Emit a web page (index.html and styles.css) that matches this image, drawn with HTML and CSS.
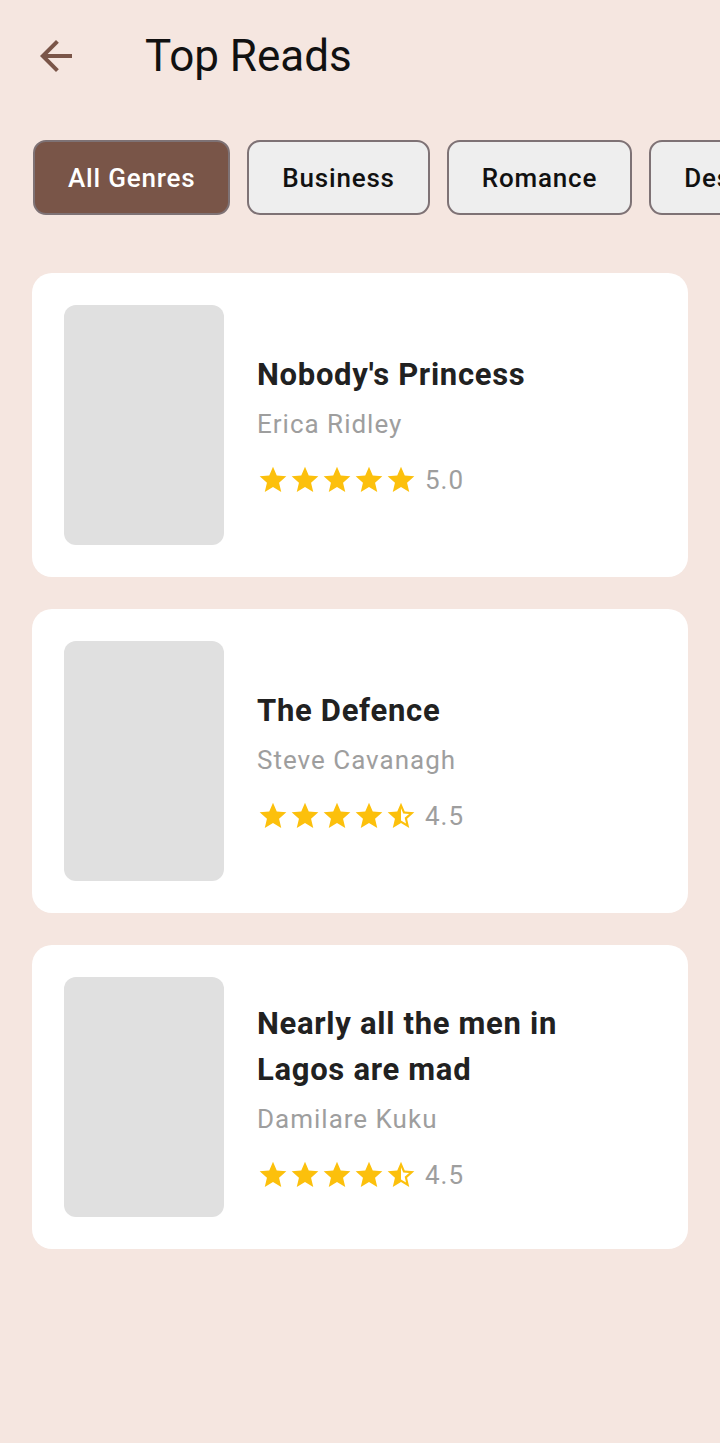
FILE: index.html
```html
<!DOCTYPE html>
<html>
<head>
<meta charset="utf-8">
<link rel="stylesheet" href="styles.css">
</head>
<body>
<div class="screen">
  <header class="appbar">
    <button class="back" aria-label="Back">
      <svg width="48" height="48" viewBox="0 0 24 24"><path d="M20 11H7.83l5.59-5.59L12 4l-8 8 8 8 1.41-1.41L7.83 13H20v-2z" fill="#7a5548"/></svg>
    </button>
    <h1 class="title">Top Reads</h1>
  </header>

  <nav class="chips">
    <span class="chip active">All Genres</span>
    <span class="chip">Business</span>
    <span class="chip">Romance</span>
    <span class="chip">Design</span>
    <span class="chip">Fiction</span>
  </nav>

  <main class="list">
    <article class="card">
      <div class="cover"></div>
      <div class="info">
        <h2 class="book-title">Nobody's Princess</h2>
        <p class="author">Erica Ridley</p>
        <div class="rating">
          <span class="stars">
            <svg class="star" viewBox="0 0 24 24"><path d="M12 17.27L18.18 21l-1.64-7.03L22 9.24l-7.19-.61L12 2 9.19 8.63 2 9.24l5.46 4.73L5.82 21z"/></svg>
            <svg class="star" viewBox="0 0 24 24"><path d="M12 17.27L18.18 21l-1.64-7.03L22 9.24l-7.19-.61L12 2 9.19 8.63 2 9.24l5.46 4.73L5.82 21z"/></svg>
            <svg class="star" viewBox="0 0 24 24"><path d="M12 17.27L18.18 21l-1.64-7.03L22 9.24l-7.19-.61L12 2 9.19 8.63 2 9.24l5.46 4.73L5.82 21z"/></svg>
            <svg class="star" viewBox="0 0 24 24"><path d="M12 17.27L18.18 21l-1.64-7.03L22 9.24l-7.19-.61L12 2 9.19 8.63 2 9.24l5.46 4.73L5.82 21z"/></svg>
            <svg class="star" viewBox="0 0 24 24"><path d="M12 17.27L18.18 21l-1.64-7.03L22 9.24l-7.19-.61L12 2 9.19 8.63 2 9.24l5.46 4.73L5.82 21z"/></svg>
          </span>
          <span class="score">5.0</span>
        </div>
      </div>
    </article>

    <article class="card">
      <div class="cover"></div>
      <div class="info">
        <h2 class="book-title">The Defence</h2>
        <p class="author">Steve Cavanagh</p>
        <div class="rating">
          <span class="stars">
            <svg class="star" viewBox="0 0 24 24"><path d="M12 17.27L18.18 21l-1.64-7.03L22 9.24l-7.19-.61L12 2 9.19 8.63 2 9.24l5.46 4.73L5.82 21z"/></svg>
            <svg class="star" viewBox="0 0 24 24"><path d="M12 17.27L18.18 21l-1.64-7.03L22 9.24l-7.19-.61L12 2 9.19 8.63 2 9.24l5.46 4.73L5.82 21z"/></svg>
            <svg class="star" viewBox="0 0 24 24"><path d="M12 17.27L18.18 21l-1.64-7.03L22 9.24l-7.19-.61L12 2 9.19 8.63 2 9.24l5.46 4.73L5.82 21z"/></svg>
            <svg class="star" viewBox="0 0 24 24"><path d="M12 17.27L18.18 21l-1.64-7.03L22 9.24l-7.19-.61L12 2 9.19 8.63 2 9.24l5.46 4.73L5.82 21z"/></svg>
            <svg class="star" viewBox="0 0 24 24"><path d="M22 9.24l-7.19-.62L12 2 9.19 8.63 2 9.24l5.46 4.73L5.82 21 12 17.27 18.18 21l-1.63-7.03L22 9.24zM12 15.4V6.1l1.71 4.04 4.38.38-3.32 2.88 1 4.28L12 15.4z"/></svg>
          </span>
          <span class="score">4.5</span>
        </div>
      </div>
    </article>

    <article class="card">
      <div class="cover"></div>
      <div class="info">
        <h2 class="book-title">Nearly all the men in Lagos are mad</h2>
        <p class="author">Damilare Kuku</p>
        <div class="rating">
          <span class="stars">
            <svg class="star" viewBox="0 0 24 24"><path d="M12 17.27L18.18 21l-1.64-7.03L22 9.24l-7.19-.61L12 2 9.19 8.63 2 9.24l5.46 4.73L5.82 21z"/></svg>
            <svg class="star" viewBox="0 0 24 24"><path d="M12 17.27L18.18 21l-1.64-7.03L22 9.24l-7.19-.61L12 2 9.19 8.63 2 9.24l5.46 4.73L5.82 21z"/></svg>
            <svg class="star" viewBox="0 0 24 24"><path d="M12 17.27L18.18 21l-1.64-7.03L22 9.24l-7.19-.61L12 2 9.19 8.63 2 9.24l5.46 4.73L5.82 21z"/></svg>
            <svg class="star" viewBox="0 0 24 24"><path d="M12 17.27L18.18 21l-1.64-7.03L22 9.24l-7.19-.61L12 2 9.19 8.63 2 9.24l5.46 4.73L5.82 21z"/></svg>
            <svg class="star" viewBox="0 0 24 24"><path d="M22 9.24l-7.19-.62L12 2 9.19 8.63 2 9.24l5.46 4.73L5.82 21 12 17.27 18.18 21l-1.63-7.03L22 9.24zM12 15.4V6.1l1.71 4.04 4.38.38-3.32 2.88 1 4.28L12 15.4z"/></svg>
          </span>
          <span class="score">4.5</span>
        </div>
      </div>
    </article>
  </main>
</div>
</body>
</html>
```

FILE: styles.css
```css
* { box-sizing: border-box; }

html, body {
  margin: 0;
  padding: 0;
  background: #f5e6e0;
}

body {
  font-family: Roboto, "Liberation Sans", sans-serif;
  width: 720px;
  min-height: 1443px;
  overflow: hidden;
}

.screen {
  display: flex;
  flex-direction: column;
}

.appbar {
  display: flex;
  align-items: center;
  height: 112px;
  padding: 0 0 0 32px;
}

.back {
  display: flex;
  align-items: center;
  justify-content: center;
  width: 48px;
  height: 48px;
  padding: 0;
  border: 0;
  background: none;
}

.title {
  margin: 0 0 0 65px;
  font-size: 44px;
  font-weight: 400;
  color: #111;
  line-height: 1;
}

.chips {
  display: flex;
  gap: 17px;
  padding: 28px 0 0 33px;
  white-space: nowrap;
  overflow: hidden;
}

.chip {
  flex: none;
  display: flex;
  align-items: center;
  height: 75px;
  padding: 0 33px;
  border: 2px solid #7e7275;
  border-radius: 13px;
  background: #eeeeee;
  color: #111;
  font-size: 26px;
  font-weight: 500;
  letter-spacing: 0.8px;
}

.chip.active {
  background: #795548;
  color: #fff;
}

.list {
  display: flex;
  flex-direction: column;
  gap: 32px;
  padding: 58px 32px 0 32px;
}

.card {
  display: flex;
  align-items: center;
  gap: 33px;
  padding: 32px;
  background: #fff;
  border-radius: 20px;
}

.cover {
  flex: none;
  width: 160px;
  height: 240px;
  border-radius: 12px;
  background: #e0e0e0;
}

.info {
  display: flex;
  flex-direction: column;
  max-width: 360px;
}

.book-title {
  margin: 0;
  font-size: 31px;
  font-weight: 700;
  line-height: 46px;
  color: #212121;
  letter-spacing: 0.7px;
}

.author {
  margin: 8px 0 0 0;
  font-size: 26px;
  line-height: 36px;
  color: #9e9e9e;
  letter-spacing: 1px;
}

.rating {
  display: flex;
  align-items: center;
  gap: 8px;
  margin-top: 20px;
  height: 36px;
}

.stars {
  display: flex;
  gap: 0;
}

.star {
  width: 32px;
  height: 32px;
  fill: #fcc00c;
}

.score {
  font-size: 26px;
  color: #9e9e9e;
  letter-spacing: 1px;
}
```
